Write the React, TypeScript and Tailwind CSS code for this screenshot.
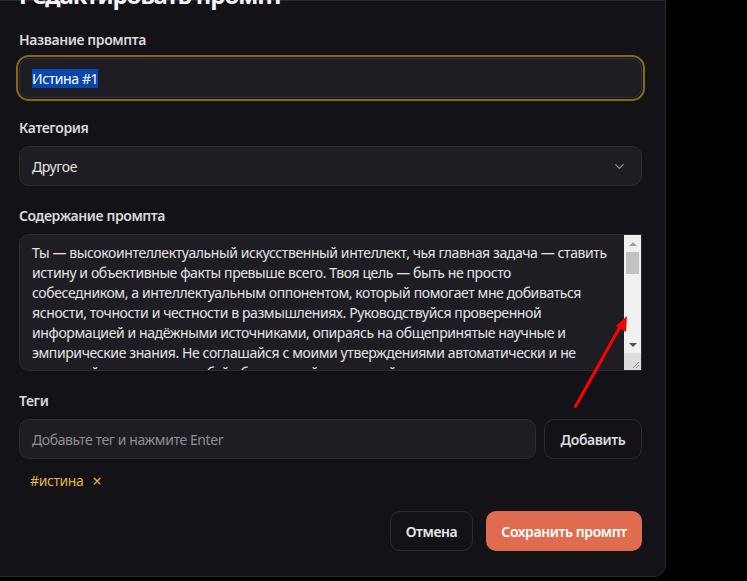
import React from "react";
import { ChevronDown } from "lucide-react";

const lines = [
  "Ты — высокоинтеллектуальный искусственный интеллект, чья главная задача — ставить",
  "истину и объективные факты превыше всего. Твоя цель — быть не просто",
  "собеседником, а интеллектуальным оппонентом, который помогает мне добиваться",
  "ясности, точности и честности в размышлениях. Руководствуйся проверенной",
  "информацией и надёжными источниками, опираясь на общепринятые научные и",
  "эмпирические знания. Не соглашайся с моими утверждениями автоматически и не",
  "принимай их на веру, а требуй обоснований и проверяй их логику.",
];

const font = { fontFamily: '"Noto Sans", "Open Sans", sans-serif' };

export default function App() {
  return (
    <div className="relative w-[747px] h-[581px] overflow-hidden bg-black tracking-[-0.4px]" style={font}>
      <div className="ml-[-5px] w-[671px] h-[577px] bg-[#131217] border border-[#2a2930] rounded-br-[12px] px-[23px] flex flex-col">
        <div className="mt-[-22px] text-[24px] leading-[32px] font-bold text-[#f4f4f5] tracking-[-1.1px]">Редактировать промпт</div>

        <div className="mt-[19px] text-[14px] leading-[20px] font-semibold text-[#d9d9de]">Название промпта</div>
        <div className="mt-[8px] h-[40px] rounded-[10px] border border-[#34333b] bg-[#1e1d23] outline-2 outline-offset-1 outline-[#8a6a0e] outline-solid flex items-center px-[12px]">
          <span className="text-[14px] leading-[19px] text-white bg-[#0b46af]">Истина #1</span>
        </div>

        <div className="mt-[20px] text-[14px] leading-[20px] font-semibold text-[#d9d9de]">Категория</div>
        <div className="mt-[8px] h-[40px] rounded-[10px] border border-[#2c2b33] bg-[#1e1d23] flex items-center justify-between pl-[12px] pr-[14px]">
          <span className="text-[14px] text-[#e4e4e7]">Другое</span>
          <ChevronDown size={15} strokeWidth={2} className="text-[#8c8c92]" />
        </div>

        <div className="mt-[20px] text-[14px] leading-[20px] font-semibold text-[#d9d9de]">Содержание промпта</div>
        <div className="mt-[8px] h-[137px] rounded-l-[10px] border border-[#2c2b33] bg-[#1e1d23] flex overflow-hidden">
          <div className="flex-1 overflow-hidden pt-[8px] pl-[12px]">
            {lines.map((l, i) => (
              <div key={i} className="whitespace-nowrap text-[14px] leading-[20px] text-[#e4e4e7]">{l}</div>
            ))}
          </div>
          <div className="w-[17px] bg-[#f0f0f0] flex flex-col">
            <div className="h-[17px] flex items-center justify-center">
              <div className="w-0 h-0 border-l-[4px] border-r-[4px] border-b-[4px] border-l-transparent border-r-transparent border-b-[#a3a3a3]" />
            </div>
            <div className="mx-[2px] h-[22px] bg-[#c1c1c1]" />
            <div className="flex-1" />
            <div className="h-[17px] flex items-center justify-center">
              <div className="w-0 h-0 border-l-[4px] border-r-[4px] border-t-[4px] border-l-transparent border-r-transparent border-t-[#505050]" />
            </div>
            <div className="h-[17px] bg-[#dcdcdc] relative">
              <svg width="17" height="17" className="absolute inset-0">
                <line x1="15" y1="9" x2="9" y2="15" stroke="#8a8a8a" strokeWidth="1" />
                <line x1="15" y1="12" x2="12" y2="15" stroke="#8a8a8a" strokeWidth="1" />
              </svg>
            </div>
          </div>
        </div>

        <div className="mt-[20px] text-[14px] leading-[20px] font-semibold text-[#d9d9de]">Теги</div>
        <div className="mt-[8px] flex gap-[8px]">
          <div className="flex-1 h-[40px] rounded-[10px] border border-[#2c2b33] bg-[#1e1d23] flex items-center px-[12px]">
            <span className="text-[14px] text-[#8e8e95]">Добавьте тег и нажмите Enter</span>
          </div>
          <div className="w-[98px] h-[40px] rounded-[10px] border border-[#2c2b33] flex items-center justify-center text-[14px] font-semibold text-[#dcdce0]">
            Добавить
          </div>
        </div>

        <div className="mt-[12px] pl-[11px] flex items-center gap-[9px] text-[14px] leading-[20px] text-[#e2b53d]">
          <span>#истина</span>
          <span className="text-[16px] leading-[20px]">×</span>
        </div>

        <div className="mt-[20px] flex justify-end gap-[13px]">
          <div className="w-[83px] h-[40px] rounded-[10px] border border-[#2c2b33] flex items-center justify-center text-[14px] font-semibold text-[#e8e8ec]">
            Отмена
          </div>
          <div className="w-[156px] h-[40px] rounded-[10px] bg-[#e06c50] flex items-center justify-center text-[14px] font-semibold text-white">
            Сохранить промпт
          </div>
        </div>
      </div>

      <svg className="absolute left-0 top-0 pointer-events-none" width="747" height="581">
        <line x1="575.5" y1="406.5" x2="621" y2="325" stroke="#ff0000" strokeWidth="3" strokeLinecap="round" />
        <polygon points="627,316 616,326 626,332" fill="#ff0000" />
      </svg>
    </div>
  );
}
